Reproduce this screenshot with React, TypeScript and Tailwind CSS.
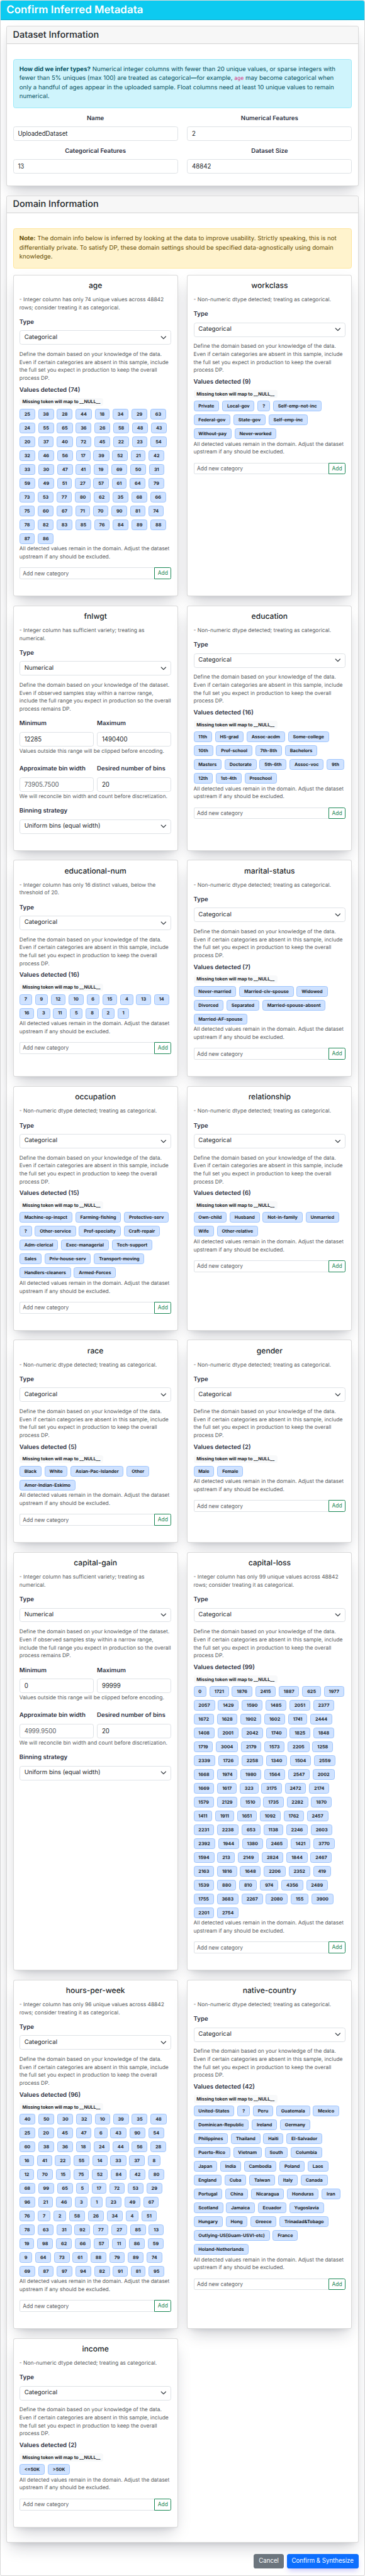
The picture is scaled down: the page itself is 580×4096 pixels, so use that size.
import React from "react";

type Feature = {
  name: string;
  reason: string;
  values?: string[];
  numeric?: { min: string; max: string; width: string; bins: string };
};

const NON_NUMERIC = "- Non-numeric dtype detected; treating as categorical.";
const VARIETY = "- Integer column has sufficient variety; treating as numerical.";
const split = (s: string) => s.split(" ");

const FEATURES: Feature[] = [
  {
    name: "age",
    reason: "- Integer column has only 74 unique values across 48842 rows; consider treating it as categorical.",
    values: split(
      "25 38 28 44 18 34 29 63 24 55 65 36 26 58 48 43 20 37 40 72 45 22 23 54 32 46 56 17 39 52 21 42 33 30 47 41 19 69 50 31 59 49 51 27 57 61 64 79 73 53 77 80 62 35 68 66 75 60 67 71 70 90 81 74 78 82 83 85 76 84 89 88 87 86",
    ),
  },
  {
    name: "workclass",
    reason: NON_NUMERIC,
    values: split("Private Local-gov ? Self-emp-not-inc Federal-gov State-gov Self-emp-inc Without-pay Never-worked"),
  },
  { name: "fnlwgt", reason: VARIETY, numeric: { min: "12285", max: "1490400", width: "73905.7500", bins: "20" } },
  {
    name: "education",
    reason: NON_NUMERIC,
    values: split(
      "11th HS-grad Assoc-acdm Some-college 10th Prof-school 7th-8th Bachelors Masters Doctorate 5th-6th Assoc-voc 9th 12th 1st-4th Preschool",
    ),
  },
  {
    name: "educational-num",
    reason: "- Integer column has only 16 distinct values, below the threshold of 20.",
    values: split("7 9 12 10 6 15 4 13 14 16 3 11 5 8 2 1"),
  },
  {
    name: "marital-status",
    reason: NON_NUMERIC,
    values: split(
      "Never-married Married-civ-spouse Widowed Divorced Separated Married-spouse-absent Married-AF-spouse",
    ),
  },
  {
    name: "occupation",
    reason: NON_NUMERIC,
    values: split(
      "Machine-op-inspct Farming-fishing Protective-serv ? Other-service Prof-specialty Craft-repair Adm-clerical Exec-managerial Tech-support Sales Priv-house-serv Transport-moving Handlers-cleaners Armed-Forces",
    ),
  },
  {
    name: "relationship",
    reason: NON_NUMERIC,
    values: split("Own-child Husband Not-in-family Unmarried Wife Other-relative"),
  },
  {
    name: "race",
    reason: NON_NUMERIC,
    values: split("Black White Asian-Pac-Islander Other Amer-Indian-Eskimo"),
  },
  { name: "gender", reason: NON_NUMERIC, values: split("Male Female") },
  { name: "capital-gain", reason: VARIETY, numeric: { min: "0", max: "99999", width: "4999.9500", bins: "20" } },
  {
    name: "capital-loss",
    reason: "- Integer column has only 99 unique values across 48842 rows; consider treating it as categorical.",
    values: split(
      "0 1721 1876 2415 1887 625 1977 2057 1429 1590 1485 2051 2377 1672 1628 1902 1602 1741 2444 1408 2001 2042 1740 1825 1848 1719 3004 2179 1573 2205 1258 2339 1726 2258 1340 1504 2559 1668 1974 1980 1564 2547 2002 1669 1617 323 3175 2472 2174 1579 2129 1510 1735 2282 1870 1411 1911 1651 1092 1762 2457 2231 2238 653 1138 2246 2603 2392 1944 1380 2465 1421 3770 1594 213 2149 2824 1844 2467 2163 1816 1648 2206 2352 419 1539 880 810 974 4356 2489 1755 3683 2267 2080 155 3900 2201 2754",
    ),
  },
  {
    name: "hours-per-week",
    reason: "- Integer column has only 96 unique values across 48842 rows; consider treating it as categorical.",
    values: split(
      "40 50 30 32 10 39 35 48 25 20 45 47 6 43 90 54 60 38 36 18 24 44 56 28 16 41 22 55 14 33 37 8 12 70 15 75 52 84 42 80 68 99 65 5 17 72 53 29 96 21 46 3 1 23 49 67 76 7 2 58 26 34 4 51 78 63 31 92 77 27 85 13 19 98 62 66 57 11 86 59 9 64 73 61 88 79 89 74 69 87 97 94 82 91 81 95",
    ),
  },
  {
    name: "native-country",
    reason: NON_NUMERIC,
    values: split(
      "United-States ? Peru Guatemala Mexico Dominican-Republic Ireland Germany Philippines Thailand Haiti El-Salvador Puerto-Rico Vietnam South Columbia Japan India Cambodia Poland Laos England Cuba Taiwan Italy Canada Portugal China Nicaragua Honduras Iran Scotland Jamaica Ecuador Yugoslavia Hungary Hong Greece Trinadad&Tobago Outlying-US(Guam-USVI-etc) France Holand-Netherlands",
    ),
  },
  { name: "income", reason: NON_NUMERIC, values: ["<=50K", ">50K"] },
];

function Label({ children, center }: { children: React.ReactNode; center?: boolean }) {
  return (
    <div
      className={`mb-[4.83px] text-[9.667px] leading-[14.5px] font-semibold whitespace-nowrap text-[#2d3142] ${center ? "text-center" : ""}`}
    >
      {children}
    </div>
  );
}

function Field({ value, muted }: { value: string; muted?: boolean }) {
  return (
    <input
      readOnly
      value={value}
      className={`block h-[22.96px] w-full rounded-[3.6px] border border-[#dee2e6] bg-white px-[6.85px] text-[9.667px] leading-[14.5px] outline-none ${muted ? "text-[#595c5f]" : "text-[#212529]"}`}
    />
  );
}

function Select({ value }: { value: string }) {
  return (
    <div className="flex h-[22.96px] items-center justify-between rounded-[3.6px] border border-[#dee2e6] bg-white px-[6.85px] text-[9.667px] leading-[14.5px] text-[#212529]">
      <span>{value}</span>
      <svg viewBox="0 0 16 16" className="h-[9.67px] w-[9.67px]" fill="none" stroke="#343a40" strokeWidth="2">
        <path strokeLinecap="round" strokeLinejoin="round" d="m2 5 6 6 6-6" />
      </svg>
    </div>
  );
}

function Hint({ children }: { children: React.ReactNode }) {
  return <div className="text-[8.458px] leading-[12.69px] text-[#585b5e]">{children}</div>;
}

function Categories({ values }: { values: string[] }) {
  return (
    <>
      <Hint>
        Define the domain based on your knowledge of the data. Even if certain categories are absent in this sample,
        include the full set you expect in production to keep the overall process DP.
      </Hint>
      <div className="mt-[4.83px]">
        <Label>Values detected ({values.length})</Label>
      </div>
      <div className="mb-[4.59px] flex">
        <span className="rounded-[3.6px] bg-[#f8f9fa] px-[4.71px] py-[2.54px] text-[7.25px] leading-[7.25px] font-bold text-[#212529]">
          Missing token will map to __NULL__
        </span>
      </div>
      <div className="flex flex-wrap gap-[4.83px]">
        {values.map((v) => (
          <span
            key={v}
            className="flex h-[17.16px] items-center rounded-[3.6px] border border-[#9ec5fe] bg-[#cfe2ff] px-[6.85px] text-[7.25px] leading-[7.25px] font-bold whitespace-nowrap text-[#212529]"
          >
            {v}
          </span>
        ))}
      </div>
      <div className="mt-[2.42px]">
        <Hint>All detected values remain in the domain. Adjust the dataset upstream if any should be excluded.</Hint>
      </div>
      <div className="mt-[9.67px] flex h-[18.73px]">
        <input
          placeholder="Add new category"
          className="h-full min-w-0 flex-1 rounded-l-[2.4px] border border-r-0 border-[#dee2e6] bg-white px-[4.44px] text-[8.458px] text-[#212529] outline-none placeholder:text-[#595c5f] placeholder:opacity-100"
        />
        <button className="h-full w-[27.4px] rounded-r-[2.4px] border border-[#198754] text-[8.458px] leading-[12.69px] text-[#198754]">
          Add
        </button>
      </div>
    </>
  );
}

function NumericRange({ min, max, width, bins }: { min: string; max: string; width: string; bins: string }) {
  return (
    <>
      <Hint>
        Define the domain based on your knowledge of the dataset. Even if observed samples stay within a narrow range,
        include the full range you expect in production so the overall process remains DP.
      </Hint>
      <div className="mt-[9.67px] grid grid-cols-2 gap-x-[4.83px]">
        <div>
          <Label>Minimum</Label>
          <Field value={min} />
        </div>
        <div>
          <Label>Maximum</Label>
          <Field value={max} />
        </div>
      </div>
      <div className="mt-[2.42px]">
        <Hint>Values outside this range will be clipped before encoding.</Hint>
      </div>
      <div className="mt-[14.5px] grid grid-cols-2 gap-x-[4.83px]">
        <div>
          <Label>Approximate bin width</Label>
          <Field value={width} muted />
        </div>
        <div>
          <Label>Desired number of bins</Label>
          <Field value={bins} />
        </div>
      </div>
      <div className="mt-[2.42px]">
        <Hint>We will reconcile bin width and count before discretization.</Hint>
      </div>
      <div className="mt-[9.67px]">
        <Label>Binning strategy</Label>
        <Select value="Uniform bins (equal width)" />
      </div>
    </>
  );
}

function FeatureCard({ feature }: { feature: Feature }) {
  return (
    <section className="min-w-0 rounded-[3.6px] border border-black/15 bg-white px-[9.27px] pt-[9.27px] pb-[26.19px] shadow-[0_12px_24px_-7px_rgba(20,25,45,0.25),0_5px_8px_-5px_rgba(20,25,45,0.12)]">
      <h3 className="mb-[9.67px] text-center text-[12.083px] leading-[14.5px] font-medium">{feature.name}</h3>
      <Hint>{feature.reason}</Hint>
      <div className="my-[9.67px]">
        <Label>Type</Label>
        <Select value={feature.numeric ? "Numerical" : "Categorical"} />
      </div>
      {feature.values && <Categories values={feature.values} />}
      {feature.numeric && <NumericRange {...feature.numeric} />}
    </section>
  );
}

function Panel({ title, children }: { title: string; children: React.ReactNode }) {
  return (
    <section className="rounded-[3.6px] border border-black/15 bg-white shadow-[0_12px_24px_-7px_rgba(20,25,45,0.25),0_5px_8px_-5px_rgba(20,25,45,0.12)]">
      <h2 className="rounded-t-[3px] border-b border-black/15 bg-[#f7f7f7] px-[9.27px] py-[4.44px] text-[14.5px] leading-[17.4px] font-medium">
        {title}
      </h2>
      <div className="px-[9.27px] pt-[24.17px]">{children}</div>
    </section>
  );
}

export default function App() {
  return (
    <div className="h-[4096px] w-[580px] overflow-hidden bg-white pt-[0.4px] font-[Inter,'Liberation_Sans',sans-serif] text-[#212529] [text-rendering:geometricPrecision]">
      <main className="h-[4095.2px] rounded-[3.6px] border border-black/15 bg-white">
        <h1 className="h-[30.18px] rounded-t-[3px] border-b border-black/15 bg-[#0dcaf0] px-[9.27px] pt-[4.6px] text-[16.917px] leading-[20.3px] font-semibold text-white">
          Confirm Inferred Metadata
        </h1>
        <div className="px-[9.27px] pt-[9.67px]">
          <Panel title="Dataset Information">
            <div className="mb-[9.67px] rounded-[3.6px] border border-[#9eeaf9] bg-[#cff4fc] p-[9.27px] text-[9.667px] leading-[14.5px] text-[#055160]">
              <strong className="font-bold">How did we infer types?</strong> Numerical integer columns with fewer than 20
              unique values, or sparse integers with fewer than 5% uniques (max 100) are treated as categorical—for
              example,{" "}
              <code className="font-['DejaVu_Sans_Mono',monospace] text-[8.458px] leading-[10px] text-[#d63384]">age</code>{" "}
              may become categorical when only a handful of ages appear in the uploaded sample. Float columns need at
              least 10 unique values to remain numerical.
            </div>
            <div className="grid grid-cols-2 gap-x-[14.5px] gap-y-[9.67px] pb-[18.94px]">
              <div>
                <Label center>Name</Label>
                <Field value="UploadedDataset" />
              </div>
              <div>
                <Label center>Numerical Features</Label>
                <Field value="2" />
              </div>
              <div>
                <Label center>Categorical Features</Label>
                <Field value="13" />
              </div>
              <div>
                <Label center>Dataset Size</Label>
                <Field value="48842" />
              </div>
            </div>
          </Panel>
          <div className="mt-[14.5px]">
            <Panel title="Domain Information">
              <div className="mb-[9.67px] rounded-[3.6px] border border-[#ffe69c] bg-[#fff3cd] p-[9.27px] text-[9.667px] leading-[14.5px] text-[#664d03]">
                <strong className="font-bold">Note:</strong> The domain info below is inferred by looking at the data to
                improve usability. Strictly speaking, this is not differentially private. To satisfy DP, these domain
                settings should be specified data-agnostically using domain knowledge.
              </div>
              <div className="grid grid-cols-2 gap-[14.5px] pb-[23.77px]">
                {FEATURES.map((f) => (
                  <FeatureCard key={f.name} feature={f} />
                ))}
              </div>
            </Panel>
          </div>
          <div className="mt-[17.1px] flex justify-end gap-[4.83px] text-[9.667px] leading-[14.5px] text-white">
            <button className="h-[22.96px] rounded-[3.6px] bg-[#6c757d] px-[7.85px]">Cancel</button>
            <button className="h-[22.96px] rounded-[3.6px] bg-[#0d6efd] px-[7.85px] shadow-[0_5px_9px_-2px_rgba(70,60,240,0.3)]">
              Confirm &amp; Synthesize
            </button>
          </div>
        </div>
      </main>
    </div>
  );
}
